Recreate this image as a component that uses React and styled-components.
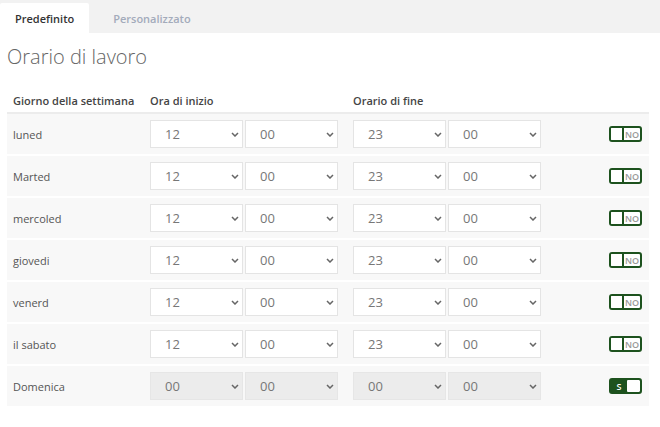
import React from "react";
import styled, { createGlobalStyle } from "styled-components";

const days = [
    { name: "luned", start: "12", end: "23", on: false },
    { name: "Marted", start: "12", end: "23", on: false },
    { name: "mercoled", start: "12", end: "23", on: false },
    { name: "giovedi", start: "12", end: "23", on: false },
    { name: "venerd", start: "12", end: "23", on: false },
    { name: "il sabato", start: "12", end: "23", on: false },
    { name: "Domenica", start: "00", end: "00", on: true },
];

const Chevron = () => (
    <svg width="8" height="5" viewBox="0 0 8 5">
        <path d="M1 1l3 3 3-3" fill="none" stroke="#666" strokeWidth="1.5" />
    </svg>
);

const TimeSelect = ({ value, disabled }) => (
    <SelectBox disabled={disabled}>
        <span>{value}</span>
        <Chevron />
    </SelectBox>
);

const App = () => {
    return (
        <>
            <GlobalStyle />
            <Page>
                <TabBar>
                    <Tab $active>Predefinito</Tab>
                    <Tab>Personalizzato</Tab>
                </TabBar>
                <Content>
                    <Title>Orario di lavoro</Title>
                    <Table>
                        <HeaderRow>
                            <HeadCell>Giorno della settimana</HeadCell>
                            <HeadCell>Ora di inizio</HeadCell>
                            <HeadCell>Orario di fine</HeadCell>
                            <HeadCell />
                        </HeaderRow>
                        {days.map((d) => (
                            <Row key={d.name}>
                                <DayName>{d.name}</DayName>
                                <SelectGroup>
                                    <TimeSelect value={d.start} disabled={d.on} />
                                    <TimeSelect value="00" disabled={d.on} />
                                </SelectGroup>
                                <SelectGroup>
                                    <TimeSelect value={d.end} disabled={d.on} />
                                    <TimeSelect value="00" disabled={d.on} />
                                </SelectGroup>
                                <ToggleCell>
                                    <Toggle $on={d.on}>
                                        {d.on ? (
                                            <>
                                                <ToggleLabel $on>S</ToggleLabel>
                                                <Knob $right />
                                            </>
                                        ) : (
                                            <>
                                                <Knob />
                                                <ToggleLabel>NO</ToggleLabel>
                                            </>
                                        )}
                                    </Toggle>
                                </ToggleCell>
                            </Row>
                        ))}
                    </Table>
                </Content>
            </Page>
        </>
    );
};

const GlobalStyle = createGlobalStyle`
    body {
        margin: 0;
        background: #fff;
        font-family: "Open Sans", "Noto Sans", sans-serif;
        color: #555;
    }
`;

const Page = styled.main`
    width: 660px;
`;

const TabBar = styled.nav`
    display: flex;
    height: 33px;
    background: #f2f2f2;
    align-items: flex-end;
`;

const Tab = styled.div`
    height: 30px;
    display: flex;
    align-items: center;
    padding: 0 ${(p) => (p.$active ? "15px" : "24px")};
    font-size: 11px;
    font-weight: 600;
    background: ${(p) => (p.$active ? "#fff" : "transparent")};
    color: ${(p) => (p.$active ? "#333" : "#a3abbb")};
    border-top-left-radius: 2px;
    border-top-right-radius: 2px;
`;

const Content = styled.section`
    padding: 10px 11px 0 7px;
`;

const Title = styled.h1`
    margin: 0 0 18px;
    font-size: 20px;
    font-weight: 300;
    color: #666;
    line-height: 28px;
`;

const Table = styled.div`
    display: flex;
    flex-direction: column;
`;

const columns = "143px 203px 188px 1fr";

const HeaderRow = styled.div`
    display: grid;
    grid-template-columns: ${columns};
    height: 23px;
    border-bottom: 2px solid #ececec;
`;

const HeadCell = styled.div`
    font-size: 11px;
    font-weight: 600;
    color: #444;
    padding-top: 4px;
    &:first-child {
        padding-left: 6px;
    }
`;

const Row = styled.div`
    display: grid;
    grid-template-columns: ${columns};
    align-items: center;
    height: 40px;
    background: #f8f8f8;
    border-bottom: 2px solid #fff;
`;

const DayName = styled.div`
    padding-left: 6px;
    font-size: 11px;
    color: #555;
`;

const SelectGroup = styled.div`
    display: flex;
    gap: 2px;
`;

const SelectBox = styled.div`
    width: 93px;
    height: 28px;
    box-sizing: border-box;
    display: flex;
    align-items: center;
    justify-content: space-between;
    padding: 0 3px 0 14px;
    background: ${(p) => (p.disabled ? "#ececec" : "#fff")};
    border: 1px solid ${(p) => (p.disabled ? "#e6e6e6" : "#e4e4e4")};
    font-size: 13px;
    color: #777;
`;

const ToggleCell = styled.div`
    display: flex;
    justify-content: flex-end;
    padding-right: 7px;
`;

const Toggle = styled.div`
    width: 33px;
    height: 16px;
    box-sizing: border-box;
    display: flex;
    border: 2px solid #1d521e;
    border-radius: 3px;
    background: ${(p) => (p.$on ? "#1d521e" : "#fff")};
    overflow: hidden;
`;

const Knob = styled.div`
    width: 13px;
    height: 100%;
    background: #fff;
    box-sizing: border-box;
    border-right: ${(p) => (p.$right ? "none" : "2px solid #1d521e")};
    border-radius: ${(p) => (p.$right ? "1px" : "0")};
`;

const ToggleLabel = styled.div`
    flex: 1;
    display: flex;
    align-items: center;
    justify-content: center;
    font-size: 9px;
    font-weight: 600;
    color: ${(p) => (p.$on ? "#fff" : "#999")};
`;

export default App;
